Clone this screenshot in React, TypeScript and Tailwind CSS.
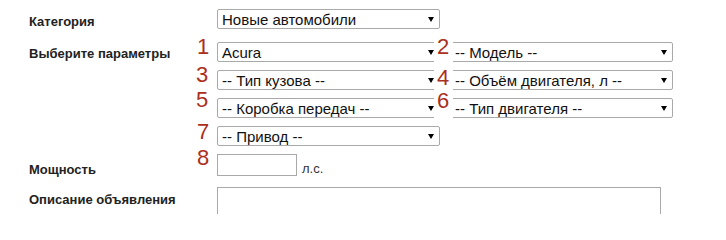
import React from "react";

const font = { fontFamily: '"Liberation Sans", Arial, sans-serif' };

function Select({ text }: { text: string }) {
  return (
    <div className="relative flex h-[20px] w-[223px] shrink-0 items-center rounded-[2px] border border-[#a9a9a9] bg-white pl-[4px] text-[15px] leading-none text-[#111]">
      <span className="whitespace-nowrap">{text}</span>
      <span className="absolute right-[5px] top-[7px] h-0 w-0 border-l-[3px] border-r-[3px] border-t-[5px] border-l-transparent border-r-transparent border-t-black" />
    </div>
  );
}

function Num({ n, left, top, h, boxed }: { n: string; left: number; top: number; h?: number; boxed?: boolean }) {
  return (
    <span
      className={
        "absolute z-10 text-[22px] leading-[22px] text-[#ab2f1d] " + (boxed ? "bg-white pl-[3px]" : "")
      }
      style={{ left, top, width: boxed ? 19 : undefined, height: h }}
    >
      {n}
    </span>
  );
}

export default function App() {
  return (
    <div className="relative h-[214px] w-[726px] overflow-hidden bg-white" style={font}>
      <div className="flex flex-col pl-[29px] pt-[9px]">
        <div className="flex">
          <div className="w-[188px] shrink-0 pt-[5px] text-[13px] font-bold leading-[15px] text-[#222]">Категория</div>
          <Select text="Новые автомобили" />
        </div>
        <div className="mt-[13px] flex">
          <div className="w-[188px] shrink-0 pt-[4px] text-[13px] font-bold leading-[15px] text-[#222]">Выберите параметры</div>
          <div className="flex flex-col gap-[8px]">
            <div className="flex gap-[10px]">
              <Select text="Acura" />
              <Select text="-- Модель --" />
            </div>
            <div className="flex gap-[10px]">
              <Select text="-- Тип кузова --" />
              <Select text="-- Объём двигателя, л --" />
            </div>
            <div className="flex gap-[10px]">
              <Select text="-- Коробка передач --" />
              <Select text="-- Тип двигателя --" />
            </div>
            <div className="flex gap-[10px]">
              <Select text="-- Привод --" />
            </div>
          </div>
        </div>
        <div className="mt-[8px] flex items-start">
          <div className="w-[188px] shrink-0 pt-[8px] text-[13px] font-bold leading-[15px] text-[#222]">Мощность</div>
          <div className="h-[22px] w-[80px] border border-[#a9a9a9] bg-white" />
          <span className="ml-[5px] pt-[7px] text-[13px] leading-[15px] text-[#333]">л.с.</span>
        </div>
        <div className="mt-[10px] flex">
          <div className="w-[188px] shrink-0 pt-[5px] text-[13px] font-bold leading-[15px] text-[#222]">Описание объявления</div>
          <div className="h-[60px] w-[444px] border border-[#a9a9a9] bg-white" />
        </div>
      </div>
      <Num n="1" left={197} top={36} />
      <Num n="3" left={196} top={64} />
      <Num n="5" left={196} top={89} />
      <Num n="7" left={197} top={121} />
      <Num n="8" left={197} top={147} />
      <Num n="2" left={434} top={36} h={27} boxed />
      <Num n="4" left={434} top={67} h={23} boxed />
      <Num n="6" left={434} top={90} h={28} boxed />
    </div>
  );
}
